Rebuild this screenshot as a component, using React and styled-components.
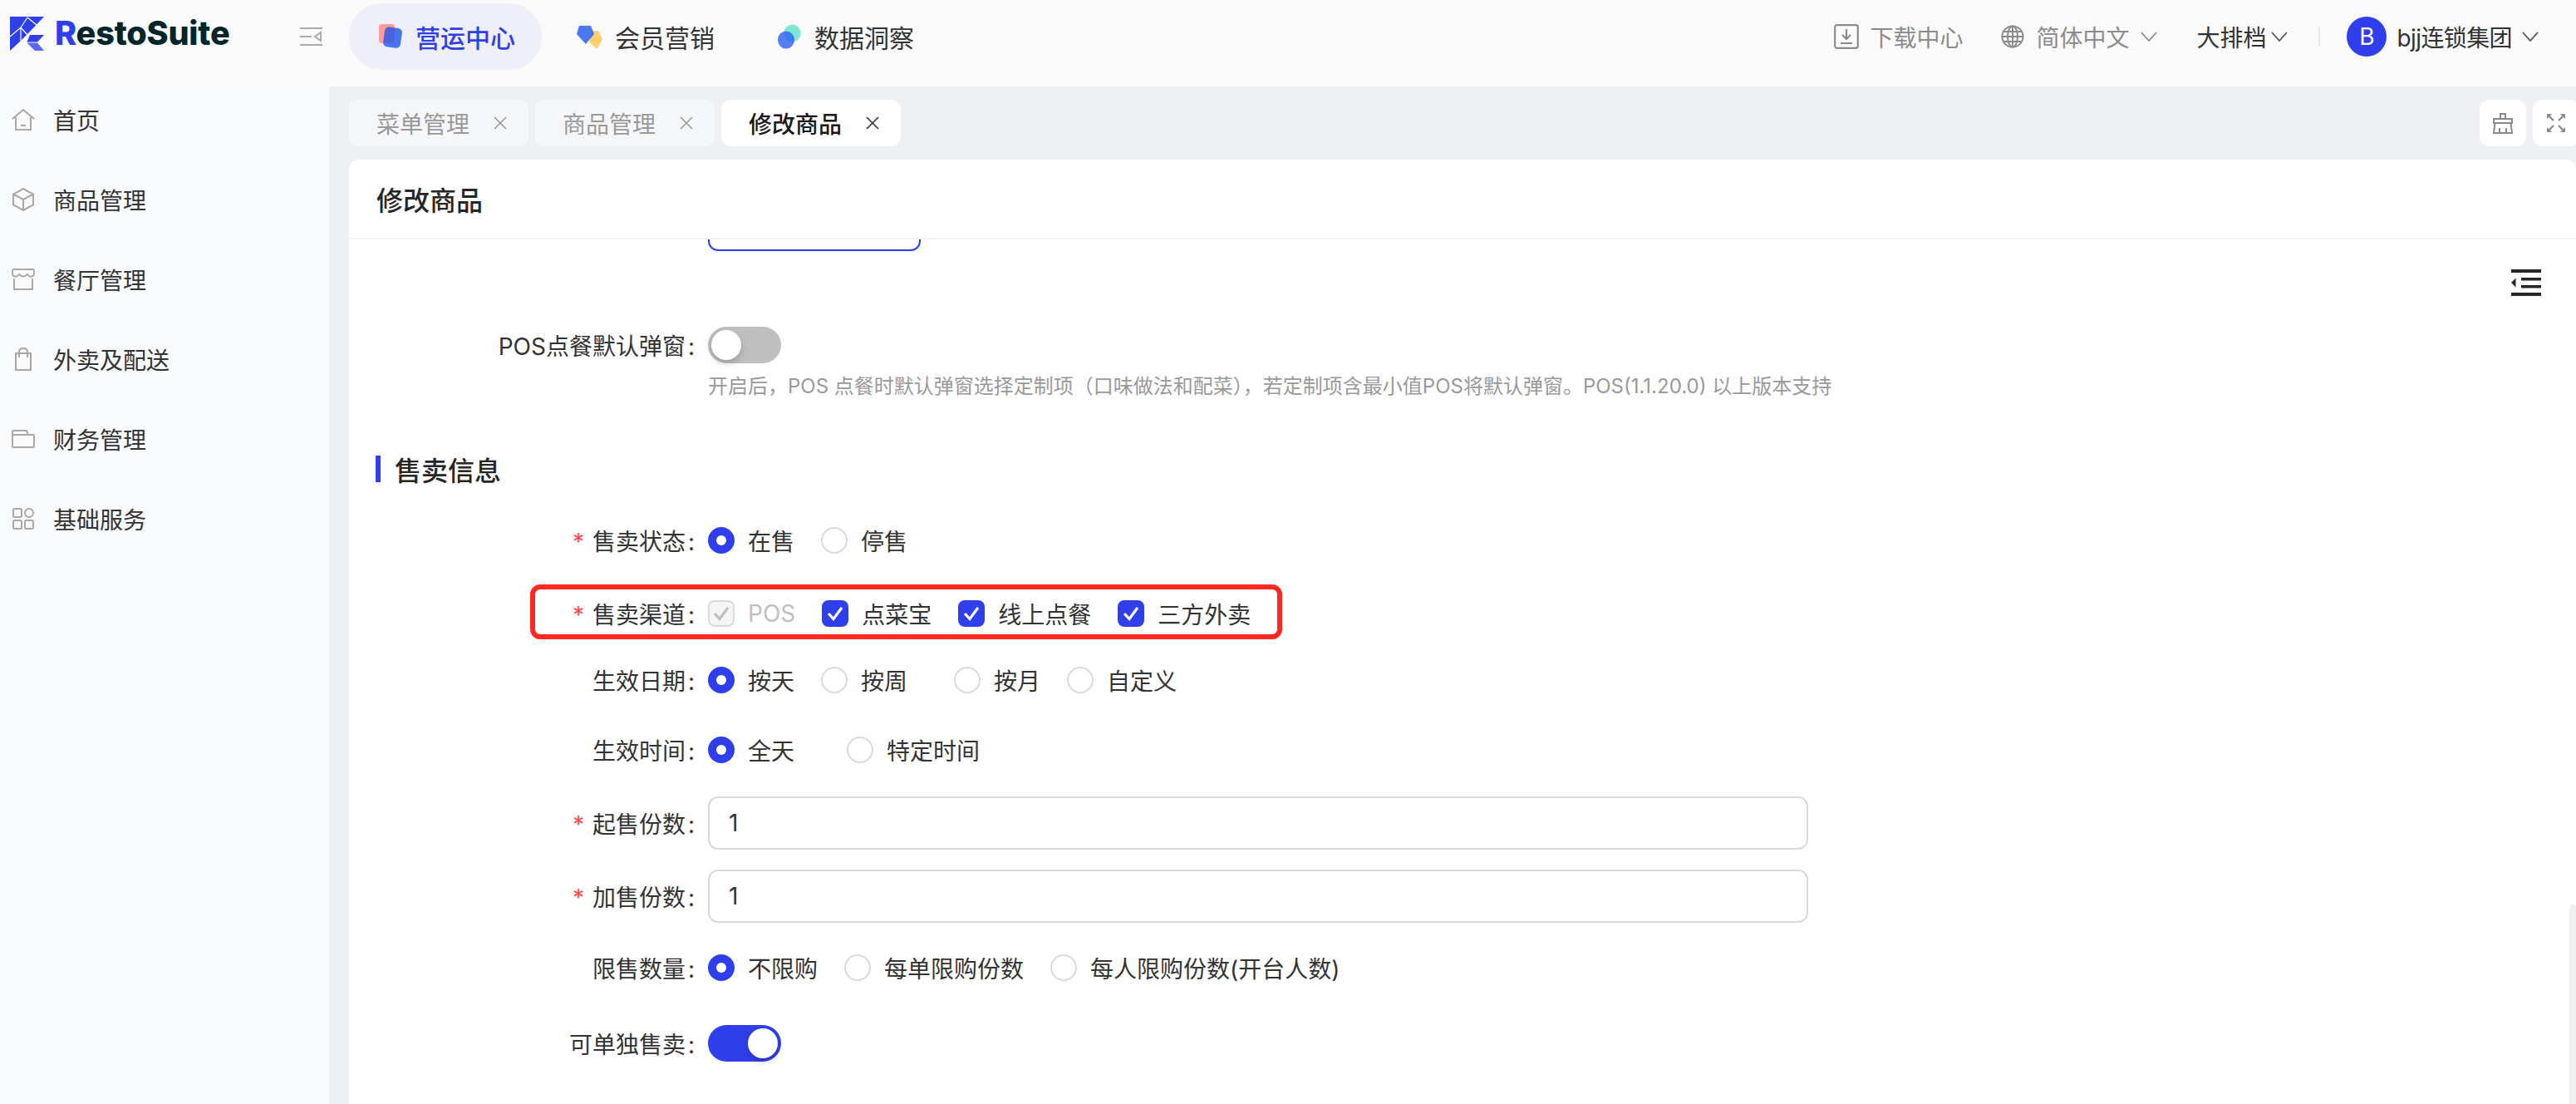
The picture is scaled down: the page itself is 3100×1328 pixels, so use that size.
import React from 'react';
import styled, { createGlobalStyle } from 'styled-components';

const BLUE = '#2f3fec';
const FONT = 'Inter, "Noto Sans CJK SC", "Noto Sans", sans-serif';

const Global = createGlobalStyle`
  html, body { margin: 0; padding: 0; width: 3100px; height: 1328px; overflow: hidden; background: #fff; }
  body { font-family: ${FONT}; font-size: 28px; color: #333; }
  * { box-sizing: border-box; }
`;

const Page = styled.div`
  width: 3100px; height: 1328px; display: flex; flex-direction: column; overflow: hidden;
`;

/* ---------- top bar ---------- */
const TopBar = styled.header`
  height: 104px; flex: none; display: flex; align-items: center; background: #fafafa; padding: 0 45px 0 12px;
`;
const Brand = styled.div`display: flex; align-items: center; gap: 13px; width: 349px; margin-top: -24px;`;
const BrandText = styled.div`
  font-family: Inter, sans-serif; font-weight: 800; font-size: 39.6px; line-height: 44px; color: #00252b; letter-spacing: -0.2px;
  b { color: ${BLUE}; font-weight: 800; }
`;
const Collapse = styled.span`display: flex; width: 59px; margin-top: -16px;`;
const Nav = styled.nav`display: flex; gap: 8px; margin-top: -16px;`;
const NavItem = styled.div`
  width: 232px; height: 80px; border-radius: 40px; display: flex; align-items: center; font-size: 30px;
  padding-left: ${p => p.$pad}px;
  color: ${p => (p.$active ? BLUE : '#333')};
  background: ${p => (p.$active ? '#eeeffb' : 'transparent')};
  font-weight: ${p => (p.$active ? 500 : 400)};
`;
const NavIcon = styled.span`display: flex; width: ${p => p.$w}px; flex: none;`;
const TopRight = styled.div`margin-left: auto; display: flex; align-items: center; margin-top: -16px;`;
const TopLink = styled.div`
  display: flex; align-items: center; color: ${p => (p.$dark ? '#333' : '#8c8c8c')};
  margin-right: ${p => p.$mr || 0}px; gap: ${p => p.$gap || 0}px; white-space: nowrap;
  letter-spacing: ${p => p.$ls || 0}px;
`;
const VDivider = styled.span`width: 2px; height: 24px; background: #e8e8e8; margin-right: 32px;`;
const Avatar = styled.span`
  width: 48px; height: 48px; border-radius: 50%; background: ${BLUE}; color: #fff; display: flex;
  align-items: center; justify-content: center; font-size: 28px; margin-right: 12px; flex: none;
`;

/* ---------- body ---------- */
const Body = styled.div`flex: 1; min-height: 0; display: flex;`;
const Sidebar = styled.aside`width: 396px; flex: none; background: #f9fafc; padding-top: 16px;`;
const MenuRow = styled.div`
  height: 48px; margin-bottom: 48px; display: flex; align-items: center; gap: 22px; padding-left: 14px; color: #333; font-size: 28px;
`;
const MenuIcon = styled.span`width: 28px; display: flex; justify-content: center;`;
const Main = styled.main`
  flex: 1; min-width: 0; background: #eff0f4; padding: 16px 0 0 24px; display: flex; flex-direction: column; overflow: hidden;
`;
const TabBar = styled.div`height: 56px; flex: none; display: flex; gap: 8px;`;
const Tab = styled.div`
  width: 216px; height: 56px; border-radius: 12px; display: flex; align-items: center; gap: 29px; padding-left: 33px;
  background: ${p => (p.$active ? '#fff' : '#f5f6f8')};
  color: ${p => (p.$active ? '#1a1a1a' : '#999')};
  font-weight: ${p => (p.$active ? 500 : 400)};
  font-size: 28px;
`;
const Tools = styled.div`margin-left: auto; margin-right: -4px; display: flex; gap: 8px;`;
const ToolBtn = styled.div`
  width: 56px; height: 56px; border-radius: 12px; background: #fff; display: flex; align-items: center; justify-content: center;
`;
const Card = styled.section`
  flex: 1; min-height: 0; margin-top: 16px; background: #fff; border-radius: 12px 12px 0 0; display: flex; flex-direction: column;
  overflow: hidden; position: relative;
`;
const CardHead = styled.div`
  height: 96px; flex: none; border-bottom: 2px solid #f3f3f3; display: flex; align-items: center; padding-left: 33px;
  font-size: 32px; font-weight: 500; color: #262626;
`;
const FormArea = styled.div`flex: 1; min-height: 0; position: relative;`;
const ClippedButton = styled.div`
  margin-left: 432px; width: 256px; height: 14px; border: 2px solid ${BLUE}; border-top: 0; border-radius: 0 0 12px 12px;
`;
const CollapseBtn = styled.span`position: absolute; right: 42px; top: 36px; display: flex;`;
const Row = styled.div`
  position: relative; display: grid; grid-template-columns: 416px 1fr; column-gap: 16px; align-items: center;
  margin-top: ${p => p.$mt}px; min-height: 44px;
`;
const Label = styled.label`
  display: flex; justify-content: flex-end; align-items: center; color: #333; font-size: 28px; line-height: 44px; white-space: nowrap;
  transform: translateY(2px);
`;
const Star = styled.span`color: #ff4d4f; margin-right: 10px; font-size: 28px;`;
const Colon = styled.span`margin-left: 3px; width: 8px;`;
const Controls = styled.div`display: flex; align-items: center; height: 44px;`;
const Option = styled.div`
  display: flex; align-items: center; gap: 16px; margin-right: ${p => p.$mr ?? 32}px; white-space: nowrap;
  color: ${p => (p.$disabled ? '#bfbfbf' : '#333')}; font-size: 28px;
`;
const Radio = styled.span`
  width: 32px; height: 32px; border-radius: 50%; flex: none; display: flex; align-items: center; justify-content: center;
  background: ${p => (p.$on ? BLUE : '#fff')};
  border: ${p => (p.$on ? 'none' : '2px solid #d9d9d9')};
  &::after { content: ''; display: ${p => (p.$on ? 'block' : 'none')}; width: 12px; height: 12px; border-radius: 50%; background: #fff; }
`;
const Check = styled.span`
  width: 32px; height: 32px; border-radius: 8px; flex: none; display: flex; align-items: center; justify-content: center;
  background: ${p => (p.$disabled ? '#f5f5f5' : BLUE)};
  border: ${p => (p.$disabled ? '2px solid #d9d9d9' : 'none')};
`;
const Toggle = styled.span`
  width: 88px; height: 44px; border-radius: 22px; display: flex; align-items: center; padding: 0 4px;
  justify-content: ${p => (p.$on ? 'flex-end' : 'flex-start')};
  background: ${p => (p.$on ? BLUE : '#bfbfbf')};
  &::after { content: ''; width: 36px; height: 36px; border-radius: 50%; background: #fff; box-shadow: 0 4px 8px rgba(0,0,0,.18); }
`;
const Help = styled.div`
  margin: 11px 0 0 432px; font-size: 24px; line-height: 34px; color: #999; white-space: nowrap;
`;
const Section = styled.div`
  margin: 66px 0 0 32px; height: 32px; display: flex; align-items: center; gap: 17px; font-size: 32px; font-weight: 500; color: #262626;
  &::before { content: ''; width: 6px; height: 32px; background: ${BLUE}; }
`;
const TextInput = styled.div`
  width: 1324px; height: 64px; border: 2px solid #d9d9d9; border-radius: 12px; padding-left: 23px; display: flex; align-items: center;
  color: #333; font-size: 28px;
`;
const InputRow = styled(Row)`min-height: 64px;`;
const Annotation = styled.span`
  position: absolute; left: 218px; top: -13px; width: 905px; height: 66px; border: 6px solid #ff2a1f; border-radius: 12px; pointer-events: none;
`;
const Scrollbar = styled.span`
  position: absolute; right: 0; top: 896px; bottom: 0; width: 8px; background: #efefef; border-radius: 8px 8px 0 0;
`;

/* ---------- icons ---------- */
const Logo = () => (
  <svg width="41" height="41" viewBox="0 0 41 41">
    <path d="M0 0H41L24 18 20 22 13 29 0 41Z" fill={BLUE} />
    <path d="M24 22H41L33 30.5H20.5Z" fill={BLUE} />
    <path d="M20.5 31.5H33L41 41H30Z" fill="#5a67f0" />
    <path d="M0 24 L13 13 L22 23 M13 13 V29 M13 13 L21 1 M21 1 L32 10" stroke="#fff" strokeWidth="1.2" fill="none" />
  </svg>
);
const CollapseIcon = () => (
  <svg width="27" height="22" viewBox="0 0 27 22" fill="none" stroke="#aaa" strokeWidth="2">
    <path d="M0 1H27M0 21H27M0 11H14M25 6V16L18 11Z" />
  </svg>
);
const NavA = () => (
  <svg width="28" height="28" viewBox="0 0 28 28" overflow="visible">
    <rect x="0" y="-1" width="19" height="23" rx="3" fill="#ff9c98" />
    <rect x="6" y="3" width="21" height="24" rx="5" transform="rotate(8 16 15)" fill="#1f55ee" fillOpacity=".8" />
  </svg>
);
const NavB = () => (
  <svg width="31" height="28" viewBox="0 0 31 28" overflow="visible">
    <path d="M19 7H26L31 17 25 28H23L15 20Z" fill="#ffcf6e" />
    <path d="M3 1H17L21 11 11 23 0 11Z" fill="#2a5ff0" fillOpacity=".85" />
  </svg>
);
const NavC = () => (
  <svg width="28" height="28" viewBox="0 0 28 28" overflow="visible">
    <ellipse cx="17.5" cy="10" rx="10" ry="10.5" fill="#7fe6d6" />
    <ellipse cx="10" cy="18" rx="10" ry="10.5" fill="#2a5ff0" fillOpacity=".8" />
  </svg>
);
const Chevron = ({ dark }) => (
  <svg width="20" height="12" viewBox="0 0 20 12" fill="none" stroke={dark ? '#555' : '#8c8c8c'} strokeWidth="1.8">
    <path d="M1 1L10 11 19 1" />
  </svg>
);
const DownloadIcon = () => (
  <svg width="30" height="30" viewBox="0 0 30 30" fill="none" stroke="#8c8c8c" strokeWidth="2.2">
    <rect x="1.2" y="1.2" width="27.6" height="27.6" rx="2.5" />
    <path d="M15 6V17M10 13L15 18 20 13M8 23H22" />
  </svg>
);
const GlobeIcon = () => (
  <svg width="28" height="28" viewBox="0 0 28 28" fill="none" stroke="#8c8c8c" strokeWidth="2">
    <circle cx="14" cy="14" r="12.6" />
    <ellipse cx="14" cy="14" rx="6" ry="12.6" />
    <path d="M14 1.4V26.6M1.4 14H26.6M3 8H25M3 20H25" />
  </svg>
);
const CloseX = ({ dark }) => (
  <svg width="16" height="16" viewBox="0 0 16 16" fill="none" stroke={dark ? '#333' : '#999'} strokeWidth="1.6">
    <path d="M1 1L15 15M15 1L1 15" />
  </svg>
);
const BroomIcon = () => (
  <svg width="24" height="25" viewBox="0 0 24 25" fill="none" stroke="#8a8a8a" strokeWidth="2">
    <path d="M9 7V1H15V7M1 7H23V12H1ZM2.5 12L1 24H23L21.5 12M8 18V24M16 18V24" />
  </svg>
);
const ExpandIcon = () => (
  <svg width="22" height="22" viewBox="0 0 22 22" fill="none" stroke="#8a8a8a" strokeWidth="2.2">
    <path d="M8 8L2 2M14 8L20 2M8 14L2 20M14 14L20 20" />
    <path d="M0 0H6L0 6ZM22 0H16L22 6ZM0 22H6L0 16ZM22 22H16L22 16Z" fill="#8a8a8a" stroke="none" />
  </svg>
);
const IndentIcon = () => (
  <svg width="36" height="32" viewBox="0 0 36 32" fill="#262626">
    <rect x="0" y="0" width="36" height="4" />
    <rect x="12" y="10" width="24" height="3.5" />
    <rect x="12" y="19" width="24" height="3.5" />
    <rect x="0" y="28" width="36" height="4" />
    <path d="M0 16L5.5 10.5V21.5Z" />
  </svg>
);
const gray = { fill: 'none', stroke: '#a8a8a8', strokeWidth: 2 };
const HomeIcon = () => (
  <svg width="28" height="26" viewBox="0 0 28 26" {...gray}>
    <path d="M1 12L14 1 27 12M5 10V25H23V10M11 20H17" />
  </svg>
);
const BoxIcon = () => (
  <svg width="28" height="28" viewBox="0 0 28 28" {...gray}>
    <path d="M14 1L26 7.5V20.5L14 27 2 20.5V7.5ZM2 7.5L14 14 26 7.5M14 14V27" />
  </svg>
);
const ShopIcon = () => (
  <svg width="28" height="26" viewBox="0 0 28 26" {...gray}>
    <path d="M3 12V25H25V12M1 8V3Q1 1 3 1H25Q27 1 27 3V8M1 8Q5 12 9 7 14 12 19 7 23 12 27 8" />
  </svg>
);
const BagIcon = () => (
  <svg width="28" height="28" viewBox="0 0 28 28" {...gray}>
    <path d="M5 7H23V27H5ZM9 12V5Q9 1 14 1 19 1 19 5V12" />
  </svg>
);
const FolderIcon = () => (
  <svg width="28" height="22" viewBox="0 0 28 22" {...gray}>
    <path d="M2 1H18L20 6H26Q27 6 27 7V20Q27 21 26 21H2Q1 21 1 20V2Q1 1 2 1ZM1 6H20" />
  </svg>
);
const GridIcon = () => (
  <svg width="26" height="26" viewBox="0 0 26 26" {...gray}>
    <rect x="1" y="1" width="10" height="10" rx="1.5" />
    <circle cx="20" cy="6" r="5" />
    <rect x="1" y="15" width="10" height="10" rx="1.5" />
    <rect x="15" y="15" width="10" height="10" rx="1.5" />
  </svg>
);
const Tick = ({ color }) => (
  <svg width="20" height="18" viewBox="0 0 20 18" fill="none" stroke={color} strokeWidth="3.2">
    <path d="M2 9L8 15.5 18 2" />
  </svg>
);

const menu = [
  [HomeIcon, '首页'], [BoxIcon, '商品管理'], [ShopIcon, '餐厅管理'],
  [BagIcon, '外卖及配送'], [FolderIcon, '财务管理'], [GridIcon, '基础服务'],
];
const tabs = [['菜单管理'], ['商品管理'], ['修改商品', true]];

const RadioOpt = ({ on, mr, children }) => (
  <Option $mr={mr}><Radio $on={on} />{children}</Option>
);
const CheckOpt = ({ disabled, children }) => (
  <Option $disabled={disabled}><Check $disabled={disabled}><Tick color={disabled ? '#bfbfbf' : '#fff'} /></Check>{children}</Option>
);
const FieldLabel = ({ req, children }) => (
  <Label>{req && <Star>*</Star>}{children}<Colon>:</Colon></Label>
);

export default function App() {
  return (
    <Page>
      <Global />
      <TopBar>
        <Brand><Logo /><BrandText><b>R</b>estoSuite</BrandText></Brand>
        <Collapse><CollapseIcon /></Collapse>
        <Nav>
          <NavItem $active $pad={36}><NavIcon $w={44}><NavA /></NavIcon>营运中心</NavItem>
          <NavItem $pad={34}><NavIcon $w={46}><NavB /></NavIcon>会员营销</NavItem>
          <NavItem $pad={36}><NavIcon $w={44}><NavC /></NavIcon>数据洞察</NavItem>
        </Nav>
        <TopRight>
          <TopLink $mr={46} $gap={13}><DownloadIcon />下载中心</TopLink>
          <TopLink $mr={47} $gap={14}><GlobeIcon />简体中文<Chevron /></TopLink>
          <TopLink $dark $mr={37} $gap={6}>大排档<Chevron dark /></TopLink>
          <VDivider />
          <Avatar>B</Avatar>
          <TopLink $dark $gap={12} $ls={-0.6}>bjj连锁集团<Chevron dark /></TopLink>
        </TopRight>
      </TopBar>
      <Body>
        <Sidebar>
          {menu.map(([Icon, text]) => (
            <MenuRow key={text}><MenuIcon><Icon /></MenuIcon>{text}</MenuRow>
          ))}
        </Sidebar>
        <Main>
          <TabBar>
            {tabs.map(([text, active]) => (
              <Tab key={text} $active={active}>{text}<CloseX dark={active} /></Tab>
            ))}
            <Tools>
              <ToolBtn><BroomIcon /></ToolBtn>
              <ToolBtn><ExpandIcon /></ToolBtn>
            </Tools>
          </TabBar>
          <Card>
            <CardHead>修改商品</CardHead>
            <FormArea>
              <ClippedButton />
              <CollapseBtn><IndentIcon /></CollapseBtn>
              <Row $mt={91}>
                <FieldLabel>POS点餐默认弹窗</FieldLabel>
                <Controls><Toggle /></Controls>
              </Row>
              <Help>开启后，POS 点餐时默认弹窗选择定制项（口味做法和配菜），若定制项含最小值POS将默认弹窗。POS(1.1.20.0) 以上版本支持</Help>
              <Section>售卖信息</Section>
              <Row $mt={48}>
                <FieldLabel req>售卖状态</FieldLabel>
                <Controls><RadioOpt on>在售</RadioOpt><RadioOpt>停售</RadioOpt></Controls>
              </Row>
              <Row $mt={44}>
                <FieldLabel req>售卖渠道</FieldLabel>
                <Controls>
                  <CheckOpt disabled>POS</CheckOpt>
                  <CheckOpt>点菜宝</CheckOpt>
                  <CheckOpt>线上点餐</CheckOpt>
                  <CheckOpt>三方外卖</CheckOpt>
                </Controls>
                <Annotation />
              </Row>
              <Row $mt={36}>
                <FieldLabel>生效日期</FieldLabel>
                <Controls>
                  <RadioOpt on>按天</RadioOpt>
                  <RadioOpt mr={56}>按周</RadioOpt>
                  <RadioOpt>按月</RadioOpt>
                  <RadioOpt>自定义</RadioOpt>
                </Controls>
              </Row>
              <Row $mt={40}>
                <FieldLabel>生效时间</FieldLabel>
                <Controls><RadioOpt on mr={63}>全天</RadioOpt><RadioOpt>特定时间</RadioOpt></Controls>
              </Row>
              <InputRow $mt={34}>
                <FieldLabel req>起售份数</FieldLabel>
                <TextInput>1</TextInput>
              </InputRow>
              <InputRow $mt={24}>
                <FieldLabel req>加售份数</FieldLabel>
                <TextInput>1</TextInput>
              </InputRow>
              <Row $mt={32}>
                <FieldLabel>限售数量</FieldLabel>
                <Controls>
                  <RadioOpt on>不限购</RadioOpt>
                  <RadioOpt>每单限购份数</RadioOpt>
                  <RadioOpt>每人限购份数(开台人数)</RadioOpt>
                </Controls>
              </Row>
              <Row $mt={47}>
                <FieldLabel>可单独售卖</FieldLabel>
                <Controls><Toggle $on /></Controls>
              </Row>
            </FormArea>
            <Scrollbar />
          </Card>
        </Main>
      </Body>
    </Page>
  );
}
